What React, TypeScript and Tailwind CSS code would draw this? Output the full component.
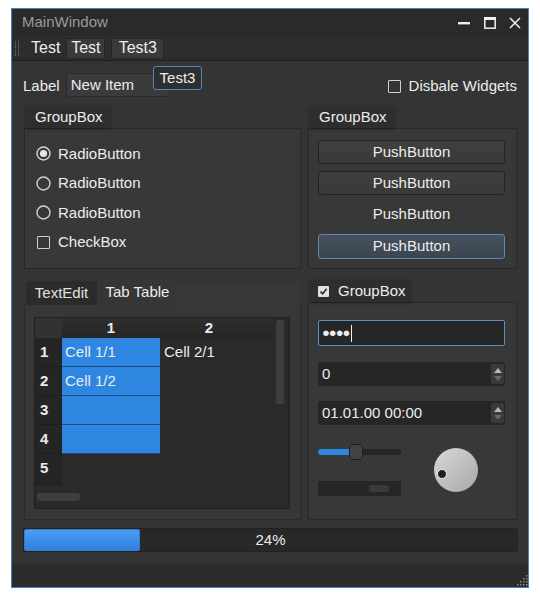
import * as React from 'react';

function Radio({ checked, label }: { checked?: boolean; label: string }) {
  return (
    <div className="flex items-center h-[29.5px]">
      <svg width="15" height="15" viewBox="0 0 15 15" className="shrink-0">
        <circle cx="7.5" cy="7.5" r="6.5" fill="none" stroke="#d4d4d4" strokeWidth="1.4" />
        {checked && <circle cx="7.5" cy="7.5" r="3.6" fill="#e6e6e6" />}
      </svg>
      <span className="ml-[7px]">{label}</span>
    </div>
  );
}

function Check({ label }: { label: string }) {
  return (
    <div className="flex items-center h-[29.5px]">
      <div className="w-[13px] h-[13px] ml-px border-[1.5px] border-[#d0d0d0] rounded-[1px] shrink-0" />
      <span className="ml-[8px]">{label}</span>
    </div>
  );
}

function GroupTitle({ children, w }: { children: React.ReactNode; w: string }) {
  return (
    <div className={`h-[22px] ${w} ml-[2px] bg-[#2e2e2e] shadow-[0_1px_3px_rgba(0,0,0,0.35)] flex items-center pl-[9px] relative z-10`}>
      {children}
    </div>
  );
}

function SpinArrows() {
  return (
    <div className="w-[13px] h-[20px] bg-[#3a3a3a] rounded-[2px] flex flex-col items-center justify-center gap-[3px]">
      <svg width="8" height="5" viewBox="0 0 8 5"><path d="M0 5 L4 0 L8 5 Z" fill="#b8b8b8" /></svg>
      <svg width="8" height="5" viewBox="0 0 8 5"><path d="M0 0 L4 5 L8 0 Z" fill="#6a6a6a" /></svg>
    </div>
  );
}

const rows = [
  { n: '1', a: 'Cell 1/1', b: 'Cell 2/1', sel: true },
  { n: '2', a: 'Cell 1/2', b: '', sel: true },
  { n: '3', a: '', b: '', sel: true },
  { n: '4', a: '', b: '', sel: true },
  { n: '5', a: '', b: '', sel: false },
];

export default function App() {
  return (
    <div className="bg-white w-[540px] h-[602px] pt-[8px] pl-[11px] font-['Liberation_Sans',Arial,sans-serif] text-[15px] text-[#ececec]">
      <div className="w-[518px] h-[580px] border border-[#4a7fc0] flex flex-col bg-[#343434]">
        {/* title bar */}
        <div className="h-[27px] bg-[#2a2a2a] flex items-center pl-[10px] pr-[6px] shrink-0">
          <span className="text-[#9a9a9a]">MainWindow</span>
          <div className="ml-auto flex items-center">
            <svg width="14" height="14" viewBox="0 0 14 14" className="mr-[12px]"><rect x="1" y="6" width="12" height="2.4" fill="#f0f0f0" /></svg>
            <svg width="14" height="14" viewBox="0 0 14 14" className="mr-[11px]">
              <rect x="1.8" y="1.8" width="10.4" height="10.4" fill="none" stroke="#f0f0f0" strokeWidth="1.5" />
              <rect x="1" y="1" width="12" height="3" fill="#f0f0f0" />
            </svg>
            <svg width="14" height="14" viewBox="0 0 14 14"><path d="M2 2 L12 12 M12 2 L2 12" stroke="#f0f0f0" strokeWidth="1.5" /></svg>
          </div>
        </div>
        {/* toolbar */}
        <div className="h-[25px] bg-[#2d2d2d] border-b border-[#1f1f1f] flex items-center shrink-0">
          <svg width="5" height="17" viewBox="0 0 5 17" className="ml-[3px]">
            {[0, 1, 2, 3, 4, 5, 6, 7].map(i => (
              <g key={i}>
                <rect x="0" y={i * 2 + 1} width="1" height="1" fill="#777" />
                <rect x="3" y={i * 2 + 1} width="1" height="1" fill="#777" />
              </g>
            ))}
          </svg>
          <span className="ml-[11px] text-[16px]">Test</span>
          <div className="ml-[6px] w-[39px] h-[21px] bg-[#3a3a3a] border border-[#262626] rounded-[2px] flex items-center justify-center text-[16px]">Test</div>
          <div className="ml-[6px] w-[53px] h-[21px] bg-[#3a3a3a] border border-[#262626] rounded-[2px] flex items-center justify-center text-[16px]">Test3</div>
        </div>
        {/* central */}
        <div className="flex-1 flex flex-col pt-[12px] pl-[11px] pr-[10px] pb-[11px]">
          {/* row 1 */}
          <div className="h-[24px] flex items-center relative">
            <span className="mt-[2px]">Label</span>
            <div className="ml-[6px] w-[104px] h-[24px] bg-[#3b3b3b] border border-[#2a2a2a] rounded-[2px] flex items-center pl-[4px]">New Item</div>
            <div className="absolute left-[130px] top-[-7px] w-[49px] h-[24px] bg-[#2f2f2f] border border-[#4f86c0] rounded-[3px] flex items-center justify-center">Test3</div>
            <div className="ml-auto flex items-center mt-[2px] mr-px">
              <div className="w-[13px] h-[13px] border-[1.5px] border-[#d0d0d0] rounded-[1px]" />
              <span className="ml-[8px]">Disbale Widgets</span>
            </div>
          </div>
          {/* row 2 */}
          <div className="mt-[9px] flex h-[163px]">
            <div className="ml-px w-[277px] flex flex-col">
              <GroupTitle w="w-[84px]">GroupBox</GroupTitle>
              <div className="flex-1 bg-[#383838] border border-[#282828] pl-[11px] pt-[10px]">
                <Radio checked label="RadioButton" />
                <Radio label="RadioButton" />
                <Radio label="RadioButton" />
                <Check label="CheckBox" />
              </div>
            </div>
            <div className="ml-[7px] w-[209px] flex flex-col">
              <GroupTitle w="w-[84px]">GroupBox</GroupTitle>
              <div className="flex-1 bg-[#383838] border border-[#282828] pl-[9px] pt-[11px] flex flex-col gap-[7px]">
                <div className="w-[187px] h-[24px] bg-[linear-gradient(#404040,#393939)] border border-[#232323] rounded-[3px] flex items-center justify-center">PushButton</div>
                <div className="w-[187px] h-[24px] bg-[linear-gradient(#404040,#393939)] border border-[#232323] rounded-[3px] flex items-center justify-center">PushButton</div>
                <div className="w-[187px] h-[25px] flex items-center justify-center">PushButton</div>
                <div className="w-[187px] h-[25px] bg-[linear-gradient(#46505b,#3c4650)] border border-[#5a88b8] rounded-[3px] flex items-center justify-center">PushButton</div>
              </div>
            </div>
          </div>
          {/* row 3 */}
          <div className="mt-[11px] flex h-[240px]">
            <div className="ml-px w-[277px] flex flex-col">
              <div className="h-[25px] flex pt-px">
                <div className="ml-[2px] w-[71px] bg-[#2b2b2b] flex items-center justify-center text-[#e0e0e0]">TextEdit</div>
                <div className="w-[81px] bg-[#363636] flex items-center justify-center mt-[-1px]">Tab Table</div>
                <div className="flex-1 bg-[#383838] mt-[1px]" />
              </div>
              <div className="flex-1 bg-[#373737] border border-[#2a2a2a] border-t-0 pt-[12px] pl-[9px]">
                <div className="w-[256px] h-[192px] bg-[#2a2a2a] border border-[#202020] flex">
                  <div className="flex-1 flex flex-col">
                    <div className="h-[20px] flex bg-[linear-gradient(#2e2e2e,#262626)] font-bold">
                      <div className="w-[27px] bg-[#323232]" />
                      <div className="w-[98px] text-center leading-[20px]">1</div>
                      <div className="w-[98px] text-center leading-[20px]">2</div>
                    </div>
                    {rows.map(r => (
                      <div key={r.n} className="h-[29px] flex">
                        <div className="w-[27px] bg-[#252525] border-b border-[#1e1e1e] font-bold pl-[5px] flex items-center">{r.n}</div>
                        <div className={`w-[98px] pl-[3px] flex items-center border-b ${r.sel ? 'bg-[#2f86e0] border-[#1d4d80]' : 'border-[#2e2e2e]'}`}>{r.a}</div>
                        <div className="w-[98px] pl-[4px] flex items-center border-b border-[#2e2e2e]">{r.b}</div>
                      </div>
                    ))}
                    <div className="h-[3px] w-[27px] bg-[#252525]" />
                    <div className="flex-1 flex items-center pl-[2px]">
                      <div className="w-[43px] h-[8px] rounded-[3px] bg-[#3e3e3e]" />
                    </div>
                  </div>
                  <div className="w-[15px] pt-[2px] pl-[2px]">
                    <div className="w-[8px] h-[84px] rounded-[3px] bg-[#3e3e3e]" />
                  </div>
                </div>
              </div>
            </div>
            <div className="ml-[7px] w-[209px] flex flex-col">
              <div className="h-[22px] w-[100px] ml-[2px] bg-[#2e2e2e] shadow-[0_1px_3px_rgba(0,0,0,0.35)] flex items-center pl-[8px] relative z-10">
                <div className="w-[11px] h-[11px] bg-[#e2e2e2] rounded-[1px] flex items-center justify-center">
                  <svg width="9" height="9" viewBox="0 0 9 9"><path d="M1.5 4.6 L3.7 6.8 L7.6 1.8" fill="none" stroke="#2a2a2a" strokeWidth="1.6" /></svg>
                </div>
                <span className="ml-[9px]">GroupBox</span>
              </div>
              <div className="flex-1 bg-[#383838] border border-[#282828] pl-[9px] pt-[17px] flex flex-col">
                <div className="w-[187px] h-[26px] bg-[#262626] border border-[#5b90c6] rounded-[2px] flex items-center pl-[3px]">
                  <span className="tracking-[-1px] text-[13px]">●●●●</span>
                  <div className="ml-[2px] w-px h-[17px] bg-[#f0f0f0]" />
                </div>
                <div className="mt-[16px] w-[187px] h-[24px] bg-[#262626] rounded-[2px] flex items-center pl-[4px] pr-px">
                  <span>0</span>
                  <div className="ml-auto"><SpinArrows /></div>
                </div>
                <div className="mt-[15px] w-[187px] h-[24px] bg-[#262626] rounded-[2px] flex items-center pl-[4px] pr-px">
                  <span>01.01.00 00:00</span>
                  <div className="ml-auto"><SpinArrows /></div>
                </div>
                <div className="flex mt-[19px]">
                  <div className="w-[83px] flex flex-col">
                    <div className="h-[16px] relative flex items-center">
                      <div className="w-full h-[6px] bg-[#262626] rounded-[3px]" />
                      <div className="absolute left-0 top-[5px] w-[33px] h-[6px] bg-[#2f86e0] rounded-l-[3px]" />
                      <div className="absolute left-[31px] top-0 w-[14px] h-[16px] bg-[#444] border border-[#1e1e1e] rounded-[4px]" />
                    </div>
                    <div className="mt-[21px] h-[15px] bg-[#262626] flex items-center pl-[51px]">
                      <div className="w-[20px] h-[7px] rounded-[3px] bg-[#3a3a3a]" />
                    </div>
                  </div>
                  <div className="ml-[33px] mt-[4px] w-[44px] h-[44px] rounded-full bg-[linear-gradient(135deg,#d8d8d8,#a8a8a8)] relative">
                    <div className="absolute left-[3px] top-[21px] w-[10px] h-[10px] rounded-full bg-[#1f1f1f] border border-[#eeeeee]" />
                  </div>
                </div>
              </div>
            </div>
          </div>
          {/* progress */}
          <div className="mt-[8px] h-[24px] bg-[#282828] border border-[#222] rounded-[2px] relative flex items-center justify-center">
            <div className="absolute left-0 top-0 bottom-0 w-[116px] bg-[linear-gradient(#4a9df3,#2f80de)] border border-[#3a7cc8] rounded-[2px]" />
            <span className="relative">24%</span>
          </div>
        </div>
        {/* status bar */}
        <div className="h-[24px] bg-[#2b2b2b] border-t border-[#2f2f2f] shrink-0 flex justify-end items-end">
          <svg width="11" height="11" viewBox="0 0 11 11" className="mb-px">
            {[[9, 1], [9, 4], [6, 4], [9, 7], [6, 7], [3, 7], [9, 10], [6, 10], [3, 10], [0, 10]].map(([x, y], i) => (
              <rect key={i} x={x} y={y - 1} width="1.5" height="1.5" fill="#8a8a8a" />
            ))}
          </svg>
        </div>
      </div>
    </div>
  );
}
